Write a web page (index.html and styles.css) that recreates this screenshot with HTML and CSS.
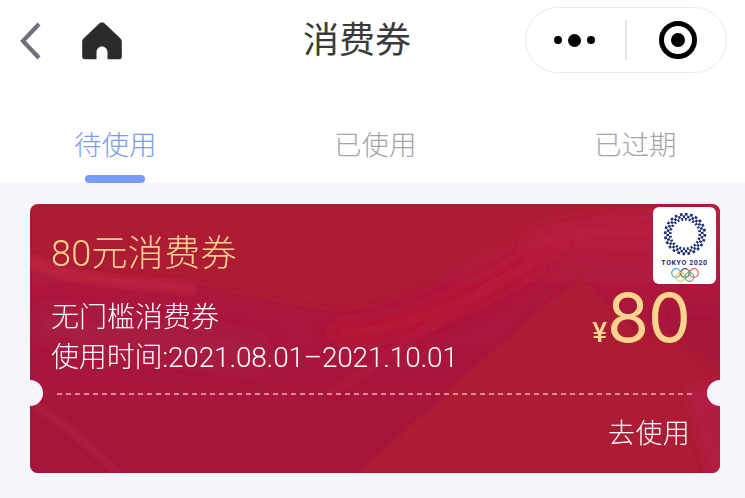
FILE: index.html
```html
<!DOCTYPE html>
<html lang="zh-CN">
<head>
<meta charset="utf-8">
<title>消费券</title>
<link rel="stylesheet" href="styles.css">
</head>
<body>
<header class="nav">
  <div class="nav-left">
    <svg class="icon-back" width="24" height="38" viewBox="0 0 24 38"><path d="M21 2 5 19l16 17" fill="none" stroke="#6f707c" stroke-width="4.200"/></svg>
    <svg class="icon-home" width="42" height="38" viewBox="0 0 42 38"><path d="M21 0.500c1.300 0 2.300.5 3.200 1.400L39 16c1.200 1.200 1.800 2.300 1.800 4v14.500c0 1.900-1 2.800-2.800 2.800H26.500V30c0-3-2.500-5.500-5.500-5.500S15.500 27 15.500 30v7.300H4c-1.800 0-2.800-.9-2.800-2.800V20c0-1.700.6-2.800 1.800-4L17.800 1.900c.9-.9 1.900-1.400 3.200-1.400Z" fill="#2b2b2b"/></svg>
  </div>
  <h1 class="nav-title">消费券</h1>
  <div class="capsule">
    <div class="capsule-dots"><i class="dot"></i><i class="dot dot-big"></i><i class="dot"></i></div>
    <div class="capsule-line"></div>
    <div class="capsule-target"><i></i></div>
  </div>
</header>

<nav class="tabs">
  <div class="tab tab-active">待使用<span class="tab-bar"></span></div>
  <div class="tab">已使用</div>
  <div class="tab">已过期</div>
</nav>

<main class="content">
  <article class="coupon">
    <svg class="coupon-bg" viewBox="0 0 690 269" preserveAspectRatio="none">
      <defs>
        <filter id="soft" filterUnits="userSpaceOnUse" x="-60" y="-60" width="810" height="390"><feGaussianBlur stdDeviation="5"/></filter>
        <filter id="band" filterUnits="userSpaceOnUse" x="-60" y="-60" width="810" height="390"><feGaussianBlur stdDeviation="9"/></filter>
        <filter id="edge" filterUnits="userSpaceOnUse" x="-60" y="-60" width="810" height="390"><feGaussianBlur stdDeviation="2"/></filter>
        <linearGradient id="wave" x1="0" y1="0" x2="0" y2="1">
          <stop offset="0" stop-color="#b81c3c"/>
          <stop offset=".4" stop-color="#aa183c"/>
          <stop offset="1" stop-color="#a4163a"/>
        </linearGradient>
      </defs>
      <rect width="690" height="269" fill="#ae1c34"/>
      <path filter="url(#soft)" d="M-10 48C60 82 120 70 171 81C220 92 262 104 300 106C360 110 400 80 443 54C490 30 560 10 700 0V130H560L320 290H-10Z" fill="url(#wave)"/>
      <g filter="url(#band)" fill="none" stroke-linecap="round">
        <path d="M20 120C80 135 150 135 220 150" stroke="#a71b42" stroke-width="36"/>
        <path d="M310 128C370 130 430 100 500 60" stroke="#b91336" stroke-width="22"/>
        <path d="M510 38C570 22 630 25 690 30" stroke="#b81e40" stroke-width="28"/>
      </g>
      <g filter="url(#edge)" fill="none">
        <path d="M-5 55C60 84 115 76 165 86" stroke="#bf233f" stroke-width="13" opacity=".6"/>
        <path d="M300 190C370 145 440 90 540 40" stroke="#ba1a3d" stroke-width="12" opacity=".4"/>
        <path d="M-5 195C35 220 65 245 90 272" stroke="#b21f41" stroke-width="10" opacity=".5"/>
      </g>
      <path filter="url(#edge)" d="M550 75C570 95 600 120 615 136L672 275H320C380 225 470 135 550 75Z" fill="#ad1b34"/>
      <path filter="url(#soft)" d="M640 105C660 115 675 115 695 108V165C670 160 650 140 640 105Z" fill="#a5193b"/>
      <path filter="url(#soft)" d="M655 185L695 175V275H680Z" fill="#b31d43"/>
    </svg>
    <div class="notch notch-left"></div>
    <div class="notch notch-right"></div>

    <div class="badge">
      <svg class="badge-wreath" width="44" height="44" viewBox="0 0 44 44" fill="none" stroke="#1e2e74" stroke-width="2.700">
        <circle cx="22" cy="22" r="19.800" pathLength="48" stroke-dasharray="1 1"/>
        <circle cx="22" cy="22" r="17.300" pathLength="48" stroke-dasharray="1 1" stroke-dashoffset="1"/>
        <circle cx="22" cy="22" r="14.800" pathLength="48" stroke-dasharray="1 1"/>
      </svg>
      <div class="badge-text">TOKYO 2020</div>
      <svg class="badge-rings" width="30" height="14" viewBox="0 0 30 14" fill="none" stroke-width="1.200">
        <circle cx="6" cy="5" r="4.300" stroke="#5aa6d8"/>
        <circle cx="15" cy="5" r="4.300" stroke="#555"/>
        <circle cx="24" cy="5" r="4.300" stroke="#d9606b"/>
        <circle cx="10.500" cy="9" r="4.300" stroke="#e8c65a"/>
        <circle cx="19.500" cy="9" r="4.300" stroke="#5cae78"/>
      </svg>
    </div>

    <div class="coupon-main">
      <div class="coupon-info">
        <h2 class="coupon-name">80元消费券</h2>
        <p class="coupon-desc">无门槛消费券</p>
        <p class="coupon-date">使用时间:2021.08.01–2021.10.01</p>
      </div>
      <div class="coupon-amount"><span class="currency">¥</span><span class="value">80</span></div>
    </div>
    <div class="coupon-dash"></div>
    <div class="coupon-foot">去使用</div>
  </article>
</main>
</body>
</html>
```

FILE: styles.css
```css
* { box-sizing: border-box; }
html, body { margin: 0; padding: 0; }
body {
  width: 745px;
  height: 498px;
  overflow: hidden;
  background: #f5f6fb;
  font-family: "Roboto", "Noto Sans CJK SC", sans-serif;
  font-weight: 300;
}
.nav {
  height: 96px;
  padding: 7px 18px 0 18px;
  background: #fff;
  display: flex;
  align-items: flex-start;
  justify-content: space-between;
  position: relative;
}
.nav-left { display: flex; align-items: center; gap: 39px; margin-top: 15px; }
.icon-back, .icon-home { display: block; }
.nav-title {
  position: absolute;
  left: 0;
  width: 714px;
  top: 16px;
  margin: 0;
  text-align: center;
  font-size: 36px;
  line-height: 50px;
  font-weight: 400;
  color: #3a3a3a;
}
.capsule {
  width: 202px;
  height: 66px;
  border: 1.500px solid #ececec;
  border-radius: 33px;
  background: #fff;
  display: flex;
  align-items: center;
}
.capsule-dots { padding-right: 30px; width: 99px; display: flex; justify-content: flex-end; gap: 6px; align-items: center; }
.dot { width: 8px; height: 8px; border-radius: 50%; background: #000; display: block; }
.dot-big { width: 13px; height: 13px; }
.capsule-line { width: 1.500px; height: 40px; background: #e4e4e4; }
.capsule-target {
  width: 38px;
  height: 38px;
  margin-left: 32px;
  border: 5px solid #000;
  border-radius: 50%;
  display: flex;
  align-items: center;
  justify-content: center;
}
.capsule-target i { width: 14px; height: 14px; background: #000; border-radius: 50%; display: block; }

.tabs {
  height: 87px;
  background: #fff;
  padding: 0 69px 0 74px;
  display: flex;
  justify-content: space-between;
}
.tab {
  position: relative;
  width: 82px;
  height: 87px;
  padding-top: 27px;
  font-family: "Noto Sans CJK SC", sans-serif;
  font-size: 27.500px;
  line-height: 40px;
  font-weight: 300;
  color: #a5a5a5;
  white-space: nowrap;
  text-align: center;
}
.tab-active { color: #7b9bed; }
.tab-bar {
  position: absolute;
  left: 11px;
  bottom: 0;
  width: 60px;
  height: 8px;
  border-radius: 4px;
  background: #7a9bfb;
}

.content { padding: 21px 25px 0 30px; }
.coupon {
  position: relative;
  width: 690px;
  height: 269px;
  border-radius: 8px;
  overflow: hidden;
  padding: 0 30px 0 21px;
  color: #fff;
}
.coupon-bg { position: absolute; inset: 0; width: 100%; height: 100%; display: block; }
.notch {
  position: absolute;
  top: 176px;
  width: 26px;
  height: 26px;
  border-radius: 50%;
  background: #f5f6fb;
}
.notch-left { left: -13px; }
.notch-right { right: -13px; }
.badge {
  position: absolute;
  top: 3px;
  right: 4px;
  width: 63px;
  height: 77px;
  background: #fff;
  border-radius: 6px;
  display: flex;
  flex-direction: column;
  align-items: center;
  padding-top: 5px;
}
.badge-wreath { display: block; }
.badge-text {
  font-family: "Roboto", sans-serif;
  font-size: 7px;
  line-height: 9px;
  font-weight: 700;
  color: #1e2e74;
  margin-top: 3px;
  letter-spacing: .6px;
  white-space: nowrap;
}
.badge-rings { display: block; }
.coupon-main {
  position: relative;
  height: 188px;
  display: flex;
  justify-content: space-between;
}
.coupon-name {
  margin: 27px 0 0;
  font-size: 36px;
  line-height: 46px;
  font-weight: 300;
  letter-spacing: .3px;
  color: #fdd48d;
  white-space: nowrap;
}
.coupon-desc, .coupon-date {
  margin: 0;
  font-size: 28px;
  line-height: 40px;
  color: #fff;
  white-space: nowrap;
}
.coupon-desc { margin-top: 21px; }
.coupon-date { letter-spacing: -.18px; }
.coupon-amount {
  display: flex;
  align-items: baseline;
  color: #fdd48d;
  margin-top: 78px;
  height: 70px;
}
.currency { font-size: 28px; line-height: 70px; font-weight: 500; }
.value { font-family: "Inter", sans-serif; font-size: 68px; line-height: 70px; font-weight: 400; letter-spacing: -1px; }
.coupon-dash {
  position: relative;
  margin: 1px 0 0 6px;
  width: 636px;
  height: 1.500px;
  background: repeating-linear-gradient(90deg, #e2859a 0 5px, transparent 5px 9px);
}
.coupon-foot {
  position: relative;
  margin-top: 17px;
  font-family: "Noto Sans CJK SC", sans-serif;
  font-size: 27px;
  line-height: 40px;
  letter-spacing: .3px;
  text-align: right;
  font-weight: 300;
}
```
